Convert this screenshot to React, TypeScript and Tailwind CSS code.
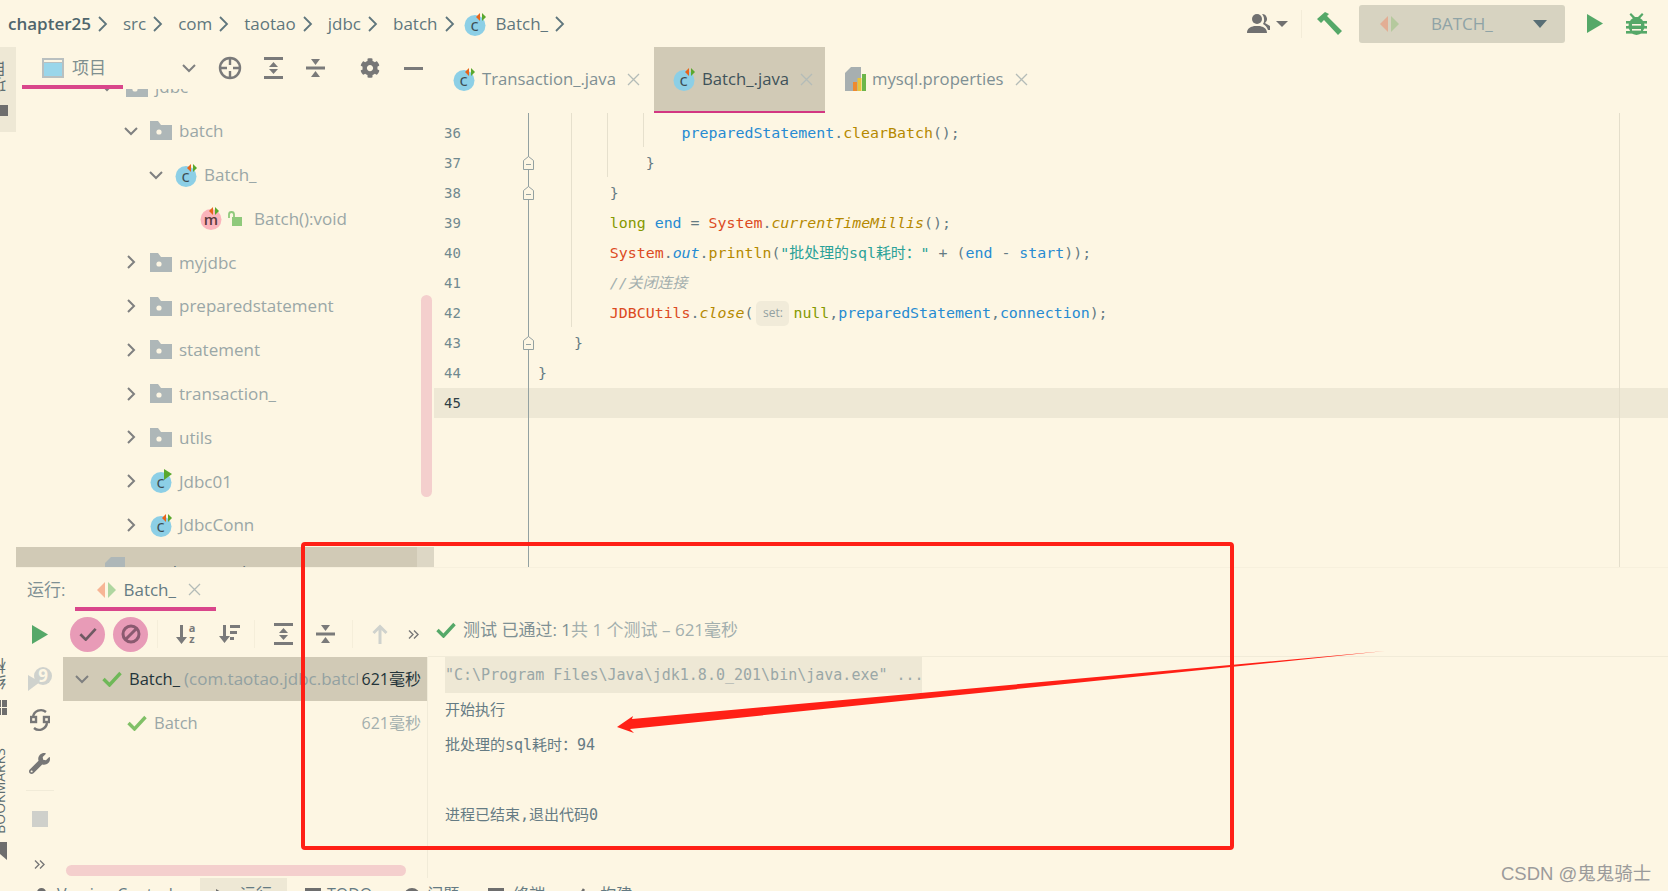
import { FaCog, FaWrench } from "react-icons/fa";

const MONO = "[font-family:'DejaVu_Sans_Mono','Noto_Sans_CJK_SC',monospace]";

function MiniRun({ x = 13, only = false }: { x?: number; only?: boolean }) {
  if (only) return <polygon points={`${x},0 ${x + 8},5 ${x},11`} fill="#5aa82d" />;
  return (
    <g>
      <polygon points={`${x + 3},1 ${x + 3},9 ${x - 1},5`} fill="#e8641b" />
      <polygon points={`${x + 5},1 ${x + 5},9 ${x + 9},5`} fill="#5aa82d" />
    </g>
  );
}

function ClassIcon({ only = false }: { only?: boolean }) {
  return (
    <svg width="23" height="24" viewBox="0 0 23 24" className="shrink-0">
      <circle cx="11" cy="13.5" r="10.5" fill="#8ccfe6" />
      <text x="10.5" y="19" textAnchor="middle" fontSize="17" fontFamily="Open Sans" fill="#3c4c52">
        c
      </text>
      <MiniRun only={only} x={only ? 14 : 13} />
    </svg>
  );
}

function MethodIcon() {
  return (
    <svg width="22" height="24" viewBox="0 0 22 24" className="shrink-0">
      <circle cx="11" cy="13.5" r="10.5" fill="#fbb4bb" />
      <text x="11" y="18.5" textAnchor="middle" fontSize="15" fontWeight="600" fontFamily="Open Sans" fill="#5b3b3b">
        m
      </text>
      <MiniRun x={10} />
    </svg>
  );
}

function FolderIcon() {
  return (
    <svg width="22" height="19" viewBox="0 0 22 19" className="shrink-0">
      <path d="M0 0h8l3 4h11v15H0z" fill="#aeb7b8" />
      <circle cx="9" cy="11" r="2.6" fill="#fdf6e3" />
    </svg>
  );
}

function Chevron({ open }: { open: boolean }) {
  return (
    <svg width="14" height="14" viewBox="0 0 14 14" fill="none" stroke="#7f8080" strokeWidth="2" className="shrink-0">
      <path d={open ? "M1 4l6 6 6-6" : "M4 1l6 6-6 6"} />
    </svg>
  );
}

function Close({ c = "#b4bcb8" }: { c?: string }) {
  return (
    <svg width="13" height="13" viewBox="0 0 13 13" stroke={c} strokeWidth="1.3" className="shrink-0">
      <path d="M1 1l11 11M12 1L1 12" />
    </svg>
  );
}

function Check({ c = "#55a868", w = 20, sw = 3.4 }: { c?: string; w?: number; sw?: number }) {
  return (
    <svg width={w} height={w * 0.8} viewBox="0 0 20 16" fill="none" stroke={c} strokeWidth={sw} className="shrink-0">
      <path d="M1.5 8l6 6L18.5 2" />
    </svg>
  );
}

function RunPair({ o = "#f7b595", g = "#afd6a0" }: { o?: string; g?: string }) {
  return (
    <svg width="19" height="16" viewBox="0 0 19 16" className="shrink-0">
      <polygon points="8,0 8,16 0,8" fill={o} />
      <polygon points="11,0 11,16 19,8" fill={g} />
    </svg>
  );
}

function ExpandAll() {
  return (
    <svg width="19" height="22" viewBox="0 0 19 22" fill="#7a7a7a" className="shrink-0">
      <rect width="19" height="3" />
      <rect y="19" width="19" height="3" />
      <polygon points="9.5,5 14,10 5,10" />
      <polygon points="9.5,17 14,12 5,12" />
    </svg>
  );
}

function CollapseAll() {
  return (
    <svg width="19" height="20" viewBox="0 0 19 20" fill="#7a7a7a" className="shrink-0">
      <rect y="8.5" width="19" height="3" />
      <polygon points="9.5,7 14,1 5,1" />
      <polygon points="9.5,13 14,19 5,19" />
    </svg>
  );
}

function More() {
  return (
    <svg width="11" height="9" viewBox="0 0 11 9" fill="none" stroke="#777" strokeWidth="1.4" className="shrink-0">
      <path d="M1 .5l4 4-4 4M6 .5l4 4-4 4" />
    </svg>
  );
}

function ToolSep() {
  return <div className="w-px h-[28px] bg-[#f5eeda] shrink-0" />;
}

const tree = [
  { label: "batch", kind: "folder", cls: "pl-[108px]", open: true, gap: "gap-[12px]" },
  { label: "Batch_", kind: "class", cls: "pl-[133px]", open: true, gap: "gap-[12px]" },
  { label: "myjdbc", kind: "folder", cls: "pl-[108px]", open: false, gap: "gap-[12px]" },
  { label: "preparedstatement", kind: "folder", cls: "pl-[108px]", open: false, gap: "gap-[12px]" },
  { label: "statement", kind: "folder", cls: "pl-[108px]", open: false, gap: "gap-[12px]" },
  { label: "transaction_", kind: "folder", cls: "pl-[108px]", open: false, gap: "gap-[12px]" },
  { label: "utils", kind: "folder", cls: "pl-[108px]", open: false, gap: "gap-[12px]" },
  { label: "Jdbc01", kind: "run", cls: "pl-[108px]", open: false, gap: "gap-[12px]" },
  { label: "JdbcConn", kind: "class", cls: "pl-[108px]", open: false, gap: "gap-[12px]" },
];

function TreeRow({ item }: { item: (typeof tree)[number] }) {
  return (
    <div className={`h-[43.8px] shrink-0 flex items-center ${item.cls} ${item.gap}`}>
      <Chevron open={item.open} />
      {item.kind === "folder" && <FolderIcon />}
      {item.kind === "class" && <ClassIcon />}
      {item.kind === "run" && <ClassIcon only />}
      <span className={`text-[#9aa7a7] text-[17px] ${item.kind === "folder" ? "-ml-[5px]" : "-ml-[6px]"}`}>{item.label}</span>
    </div>
  );
}

function ProjectPanel() {
  return (
    <div className="w-[418px] shrink-0 flex flex-col overflow-hidden relative">
      <div className="h-[42px] flex items-center relative shrink-0">
        <svg width="22" height="20" viewBox="0 0 22 20" className="ml-[26px] shrink-0">
          <rect width="22" height="20" fill="#b9c0c0" />
          <rect x="2" y="5" width="18" height="13" fill="#9ad6ea" />
          <rect x="2" y="2" width="18" height="2" fill="#fdf6e3" />
        </svg>
        <span className="ml-[8px] text-[17px] text-[#7f8f8f]">项目</span>
        <span className="ml-[76px]">
          <Chevron open />
        </span>
        <svg width="24" height="24" viewBox="0 0 24 24" fill="none" stroke="#7a7a7a" strokeWidth="2.4" className="ml-[22px] shrink-0">
          <circle cx="12" cy="12" r="10" />
          <path d="M12 2v7M12 15v7M2 12h7M15 12h7" />
        </svg>
        <span className="ml-[22px]">
          <ExpandAll />
        </span>
        <span className="ml-[23px]">
          <CollapseAll />
        </span>
        <FaCog className="ml-[35px] text-[#777] text-[20px] shrink-0" />
        <div className="ml-[24px] w-[19px] h-[3px] bg-[#7a7a7a] shrink-0" />
        <div className="absolute left-[6px] top-[38px] w-[101px] h-[4px] bg-[#d9468b]" />
      </div>
      <div className="h-[20px] overflow-hidden shrink-0">
        <div className="h-[44px] -mt-[24px] flex items-center pl-[84px] gap-[12px]">
          <Chevron open />
          <FolderIcon />
          <span className="text-[#9aa7a7] text-[17px] -ml-[5px]">jdbc</span>
        </div>
      </div>
      <TreeRow item={tree[0]} />
      <TreeRow item={tree[1]} />
      <div className="h-[43.8px] shrink-0 flex items-center pl-[184px]">
        <MethodIcon />
        <svg width="14" height="15" viewBox="0 0 14 15" className="ml-[6px] shrink-0">
          <rect x="4" y="6" width="10" height="9" fill="#8fc97b" />
          <path d="M1 7V3.5a2.5 2.5 0 0 1 5 0V6" fill="none" stroke="#8fc97b" strokeWidth="1.8" />
        </svg>
        <span className="ml-[12px] text-[#9aa7a7] text-[17px]">Batch():void</span>
      </div>
      {tree.slice(2).map((item) => (
        <TreeRow key={item.label} item={item} />
      ))}
      <div className="h-[44px] shrink-0 bg-[#ddd7c5]">
        <div className="w-[401px] h-full bg-[#d1cab6] flex items-center pl-[89px] gap-[5px]">
          <svg width="20" height="24" viewBox="0 0 20 24" className="shrink-0">
            <path d="M6 0h14v24H0V6z" fill="#aeb7b8" />
          </svg>
          <span className="mt-[5px] text-[17px] text-[#586e75]">mysql.properties</span>
        </div>
      </div>
      <div className="absolute left-[405px] top-[248px] w-[11px] h-[202px] rounded-full bg-[#f4cfcd]" />
    </div>
  );
}

function Tab({ name, icon, active, cls }: { name: string; icon: React.ReactNode; active?: boolean; cls: string }) {
  return (
    <div
      className={`h-[66px] flex items-center border-b-2 shrink-0 ${cls} ${
        active ? "bg-[#d1cab6] border-[#d33682]" : "border-transparent"
      }`}
    >
      {icon}
      <span className={`ml-[6px] text-[16.7px] ${active ? "text-[#3f5259]" : "text-[#7f9094]"}`}>{name}</span>
      <span className="ml-[11px]">
        <Close />
      </span>
    </div>
  );
}

const B = "text-[#268bd2]";
const Y = "text-[#b58900]";
const R = "text-[#dc4a22]";
const G = "text-[#859900]";
const P = "text-[#657b83]";

const code: React.ReactNode[] = [
  <>
    <span className={B}>{"                preparedStatement"}</span>
    <span className={P}>.</span>
    <span className={Y}>clearBatch</span>
    <span className={P}>();</span>
  </>,
  <span className={P}>{"            }"}</span>,
  <span className={P}>{"        }"}</span>,
  <>
    <span className={G}>{"        long "}</span>
    <span className={B}>end</span>
    <span className={P}> = </span>
    <span className={R}>System</span>
    <span className={P}>.</span>
    <span className={`${Y} italic`}>currentTimeMillis</span>
    <span className={P}>();</span>
  </>,
  <>
    <span className={R}>{"        System"}</span>
    <span className={P}>.</span>
    <span className={`${B} italic`}>out</span>
    <span className={P}>.</span>
    <span className={Y}>println</span>
    <span className={P}>(</span>
    <span className="text-[#2aa198]">"批处理的sql耗时："</span>
    <span className={P}> + (</span>
    <span className={B}>end</span>
    <span className={P}> - </span>
    <span className={B}>start</span>
    <span className={P}>));</span>
  </>,
  <span className="text-[#a3afae] italic">{"        //关闭连接"}</span>,
  <span className="flex items-center">
    <span className={R}>{"        JDBCUtils"}</span>
    <span className={P}>.</span>
    <span className={`${Y} italic`}>close</span>
    <span className={P}>(</span>
    <span className="ml-[3px] mr-[4px] w-[33px] h-[25px] rounded-[5px] bg-[#f1ebd9] flex items-center justify-center text-[12px] text-[#93a1a1] [font-family:'Open_Sans',sans-serif]">
      set:
    </span>
    <span className={G}>null</span>
    <span className={P}>,</span>
    <span className={B}>preparedStatement</span>
    <span className={P}>,</span>
    <span className={B}>connection</span>
    <span className={P}>);</span>
  </span>,
  <span className={P}>{"    }"}</span>,
  <span className={P}>{"}"}</span>,
  <span />,
];

function FoldMark({ cls }: { cls: string }) {
  return (
    <svg width="11" height="14" viewBox="0 0 11 14" fill="#fdf6e3" stroke="#93a1a1" className={`absolute left-[89px] ${cls}`}>
      <path d="M.5 13.5V4.5L5.5.5l5 4v9z" />
      <path d="M3 8.5h5" />
    </svg>
  );
}

function Editor() {
  return (
    <div className="flex-1 min-w-0 flex flex-col overflow-hidden">
      <div className="flex h-[66px] shrink-0">
        <Tab name="Transaction_.java" cls="w-[220px] pl-[19px]" icon={<ClassIcon />} />
        <Tab name="Batch_.java" cls="w-[171px] pl-[19px]" active icon={<ClassIcon />} />
        <Tab
          name="mysql.properties"
          cls="pl-[20px]"
          icon={
            <svg width="21" height="24" viewBox="0 0 21 24" className="shrink-0">
              <path d="M6 0h10v24H0V6z" fill="#a7afb0" />
              <rect x="8" y="15" width="4" height="9" fill="#ef8a2e" />
              <rect x="12.5" y="11" width="4" height="13" fill="#e8c33c" />
              <rect x="17" y="7" width="4" height="17" fill="#6cb649" />
            </svg>
          }
        />
      </div>
      <div className={`flex-1 relative pt-[5px] overflow-hidden text-[14.92px] ${MONO}`}>
        {code.map((line, i) => (
          <div key={i} className={`h-[30px] flex items-center ${i === 9 ? "bg-[#eee8d5]" : ""}`}>
            <span className={`w-[104px] pl-[10px] shrink-0 text-[14px] ${i === 9 ? "text-[#2f3f46]" : "text-[#71898f]"}`}>
              {36 + i}
            </span>
            <span className="whitespace-pre">{line}</span>
          </div>
        ))}
        {/* fold gutter and indent guides */}
        <div className="absolute left-[94px] top-0 bottom-0 w-px bg-[#93a1a1]" />
        <div className="absolute left-[137px] top-0 h-[214px] w-px bg-[#e6e0cd]" />
        <div className="absolute left-[173px] top-0 h-[64px] w-px bg-[#e6e0cd]" />
        <div className="absolute left-[209px] top-0 h-[34px] w-px bg-[#e6e0cd]" />
        <FoldMark cls="top-[43px]" />
        <FoldMark cls="top-[73px]" />
        <FoldMark cls="top-[223px]" />
        <div className="absolute left-[1185px] top-0 bottom-0 w-px bg-[#e4decb]" />
      </div>
    </div>
  );
}

function TestPanel() {
  return (
    <div className="w-[365px] shrink-0 flex flex-col">
      <div className="h-[46px] flex items-center shrink-0 pl-[7px]">
        <span className="w-[35px] h-[35px] rounded-full bg-[#e89bb7] flex items-center justify-center shrink-0">
          <Check c="#6f5a63" w={18} sw={3} />
        </span>
        <span className="ml-[8px] w-[35px] h-[35px] rounded-full bg-[#e89bb7] flex items-center justify-center shrink-0">
          <svg width="20" height="20" viewBox="0 0 20 20" fill="none" stroke="#8a5a70" strokeWidth="3">
            <circle cx="10" cy="10" r="8" />
            <path d="M4.5 15.5l11-11" />
          </svg>
        </span>
        <span className="ml-[9px]">
          <ToolSep />
        </span>
        <svg width="22" height="22" viewBox="0 0 22 22" className="ml-[17px] shrink-0" fill="#7a7a7a">
          <path d="M5 2h3v12h4l-5.5 7L1 14h4z" />
          <text x="17" y="9" textAnchor="middle" fontSize="11" fontWeight="700" fontFamily="Open Sans">a</text>
          <text x="17" y="20" textAnchor="middle" fontSize="11" fontWeight="700" fontFamily="Open Sans">z</text>
        </svg>
        <svg width="22" height="20" viewBox="0 0 22 20" className="ml-[21px] shrink-0" fill="#7a7a7a">
          <path d="M5 1h3v11h4l-5.5 7L1 12h4z" />
          <rect x="12" y="1" width="10" height="3" />
          <rect x="12" y="7" width="7" height="3" />
          <rect x="12" y="13" width="4" height="3" />
        </svg>
        <span className="ml-[14px]">
          <ToolSep />
        </span>
        <span className="ml-[19px]">
          <ExpandAll />
        </span>
        <span className="ml-[23px]">
          <CollapseAll />
        </span>
        <span className="ml-[17px]">
          <ToolSep />
        </span>
        <svg width="16" height="20" viewBox="0 0 16 20" fill="none" stroke="#cfd2cd" strokeWidth="3" className="ml-[19px] shrink-0">
          <path d="M8 20V3M1.5 9L8 2.5 14.5 9" />
        </svg>
        <span className="ml-[20px]">
          <More />
        </span>
      </div>
      <div className="flex-1 flex flex-col border-r border-[#f1ebd8] relative">
        <div className="h-[44px] bg-[#d1cab6] flex items-center pl-[12px] shrink-0">
          <Chevron open />
          <span className="ml-[13px]">
            <Check c="#6fb858" />
          </span>
          <span className="ml-[7px] w-[55px] shrink-0 text-[16.5px] text-[#23343a]">Batch_</span>
          <span className="w-[174px] shrink-0 overflow-hidden whitespace-nowrap text-[17px] text-[#93a1a1]">
            (com.taotao.jdbc.batch)
          </span>
          <span className="ml-auto mr-[6px] text-[16px] text-[#23343a]">621毫秒</span>
        </div>
        <div className="h-[44px] flex items-center pl-[64px] shrink-0">
          <Check c="#80c067" />
          <span className="ml-[7px] text-[16.5px] text-[#9aa7a7]">Batch</span>
          <span className="ml-auto mr-[6px] text-[16px] text-[#a3afae]">621毫秒</span>
        </div>
        <div className="absolute left-[3px] top-[208px] w-[340px] h-[11px] rounded-full bg-[#f4cfcd]" />
      </div>
    </div>
  );
}

function RunPanel() {
  return (
    <div className="h-[311px] flex flex-col shrink-0 border-t border-[#f7f0dd]">
      <div className="h-[43px] relative flex items-center shrink-0">
        <span className="ml-[11px] text-[17px] text-[#7f9094]">运行:</span>
        <span className="ml-[32px]">
          <RunPair />
        </span>
        <span className="ml-[7px] text-[17px] text-[#657b83]">Batch_</span>
        <span className="ml-[12px]">
          <Close />
        </span>
        <div className="absolute left-[59px] top-[39px] w-[141px] h-[4px] bg-[#d9468b]" />
      </div>
      <div className="flex-1 flex min-h-0">
        <div className="w-[47px] shrink-0 flex flex-col items-center">
          <svg width="16" height="19" viewBox="0 0 16 19" className="mt-[14px] shrink-0">
            <polygon points="0,0 16,9.5 0,19" fill="#55a868" />
          </svg>
          <svg width="24" height="26" viewBox="0 0 24 26" className="mt-[23px] shrink-0">
            <polygon points="0,8 12,15 0,24" fill="#cfd2cd" />
            <circle cx="15" cy="9" r="9" fill="#cfd2cd" />
            <text x="15" y="15" textAnchor="middle" fontSize="17" fontWeight="700" fontFamily="Open Sans" fill="#fdf6e3">9</text>
          </svg>
          <svg width="20" height="26" viewBox="0 0 20 26" fill="none" stroke="#777" strokeWidth="2.4" className="mt-[14px] shrink-0">
            <path d="M3 10a8 8 0 0 1 13-5M17 16a8 8 0 0 1-13 5" />
            <rect x="1" y="10" width="5" height="5" />
            <rect x="14" y="10" width="5" height="5" />
          </svg>
          <FaWrench className="mt-[20px] text-[#777] text-[21px] shrink-0" />
          <div className="mt-[16px] w-[28px] h-px bg-[#f1ebd8] shrink-0" />
          <div className="mt-[20px] w-[16px] h-[16px] bg-[#cfd0cb] shrink-0" />
          <span className="mt-[33px]">
            <More />
          </span>
        </div>
        <TestPanel />
        <div className="flex-1 min-w-0 flex flex-col">
          <div className="h-[46px] flex items-center border-b border-[#f1ebd8] shrink-0 pl-[8px] pb-[8px]">
            <Check w={20} />
            <span className="ml-[7px] text-[17px] text-[#7f9094]">测试 已通过: 1</span>
            <span className="text-[17px] text-[#a3afae]">共 1 个测试 – 621毫秒</span>
          </div>
          <div className={`pl-[17px] text-[15px] ${MONO} text-[#657b83]`}>
            <div className="h-[36px] w-[477px] bg-[#eee8d5] flex items-center text-[#9aa7a7] whitespace-pre">
              "C:\Program Files\Java\jdk1.8.0_201\bin\java.exe" ...
            </div>
            <div className="h-[35px] flex items-center">开始执行</div>
            <div className="h-[35px] flex items-center">批处理的sql耗时：94</div>
            <div className="h-[35px]" />
            <div className="h-[35px] flex items-center">进程已结束,退出代码0</div>
          </div>
        </div>
      </div>
    </div>
  );
}

function LeftRail() {
  return (
    <div className="w-[16px] shrink-0 flex flex-col overflow-hidden text-[#5f6f72]">
      <div className="h-[85px] bg-[#eee8d5] flex flex-col shrink-0">
        <span className="mt-[14px] -ml-[9px] text-[16px] leading-none [writing-mode:vertical-rl] rotate-180 h-[32px]">项目</span>
        <div className="mt-[12px] -ml-[2px] w-[10px] h-[11px] bg-[#6e6e6e]" />
      </div>
      <span className="mt-[526px] -ml-[9px] text-[16px] leading-none [writing-mode:vertical-rl] rotate-180 h-[32px] shrink-0">结构</span>
      <div className="mt-[10px] w-[7px] h-[15px] grid grid-cols-[1px_5px] gap-[1px] shrink-0">
        <div className="bg-[#6e6e6e]" />
        <div className="bg-[#6e6e6e]" />
        <div className="bg-[#6e6e6e]" />
        <div className="bg-[#6e6e6e]" />
      </div>
      <span className="mt-[33px] -ml-[7px] text-[14px] leading-none uppercase [writing-mode:vertical-rl] rotate-180 shrink-0">Bookmarks</span>
      <svg width="8" height="18" viewBox="0 0 8 18" className="mt-[8px] shrink-0">
        <path d="M0 0h7v18L0 12z" fill="#6e6e6e" />
      </svg>
    </div>
  );
}

function StatusBar() {
  return (
    <div className="h-[13px] shrink-0 flex overflow-hidden text-[16px] text-[#657b83] leading-[22px]">
      <div className="w-[37px] shrink-0" />
      <div className="w-[163px] shrink-0 flex pt-[5px]">
        <div className="w-[9px] h-[9px] mt-[5px] rounded-full bg-[#6e6e6e] shrink-0" />
        <span className="ml-[11px]">Version Control</span>
      </div>
      <div className="w-[87px] shrink-0 bg-[#eee8d5] flex pt-[5px] pl-[16px]">
        <svg width="10" height="12" viewBox="0 0 10 12" className="mt-[6px] shrink-0">
          <polygon points="0,0 10,6 0,12" fill="#6e6e6e" />
        </svg>
        <span className="ml-[14px]">运行</span>
      </div>
      <div className="flex pt-[5px] ml-[18px]">
        <div className="w-[16px] h-[12px] mt-[5px] bg-[#6e6e6e] shrink-0" />
        <span className="ml-[6px]">TODO</span>
      </div>
      <div className="flex pt-[5px] ml-[32px]">
        <div className="w-[16px] h-[16px] mt-[5px] rounded-full bg-[#6e6e6e] shrink-0" />
        <span className="ml-[7px]">问题</span>
      </div>
      <div className="flex pt-[5px] ml-[29px]">
        <div className="w-[16px] h-[12px] mt-[5px] bg-[#6e6e6e] shrink-0" />
        <span className="ml-[9px]">终端</span>
      </div>
      <div className="flex pt-[5px] ml-[30px]">
        <svg width="10" height="14" viewBox="0 0 10 14" fill="none" stroke="#6e6e6e" strokeWidth="2.6" className="mt-[5px] shrink-0">
          <path d="M9 1L2 12" />
        </svg>
        <span className="ml-[15px]">构建</span>
      </div>
    </div>
  );
}

function Crumb({ text, dark }: { text: string; dark?: boolean }) {
  return <span className={`text-[17px] ${dark ? "text-[#4f656c] font-semibold" : "text-[#5f767d]"}`}>{text}</span>;
}

function CrumbSep() {
  return (
    <svg width="10" height="16" viewBox="0 0 10 16" fill="none" stroke="#5f767d" strokeWidth="1.8" className="ml-[7px] mr-[15px] shrink-0">
      <path d="M1 1l7 7-7 7" />
    </svg>
  );
}

function TopBar() {
  return (
    <div className="h-[47px] shrink-0 flex items-center pl-[8px]">
      {["chapter25", "src", "com", "taotao", "jdbc", "batch"].map((t, i) => (
        <span key={t} className="flex items-center">
          <Crumb text={t} dark={i === 0} />
          <CrumbSep />
        </span>
      ))}
      <span className="-ml-[6px]">
        <ClassIcon />
      </span>
      <span className="ml-[9px]">
        <Crumb text="Batch_" />
      </span>
      <CrumbSep />
      <div className="ml-auto flex items-center">
        <svg width="24" height="19" viewBox="0 0 24 19" fill="#707070" className="shrink-0">
          <circle cx="10" cy="5" r="5" />
          <path d="M0 19c0-5 4-6 7-7h6c3 1 7 2 7 7z" />
          <path d="M15 0a5 5 0 0 1 3 9l5 3v4h-2c-1-3-3-5-5-6a7 7 0 0 0 1-5c0-2-1-4-2-5z" />
        </svg>
        <svg width="12" height="6" viewBox="0 0 12 6" className="ml-[5px] shrink-0">
          <polygon points="0,0 12,0 6,6" fill="#707070" />
        </svg>
        <div className="ml-[13px] w-px h-[28px] bg-[#f3ecd8]" />
        <svg width="25" height="23" viewBox="0 0 25 23" fill="#55a868" className="ml-[15px] shrink-0">
          <path d="M0 7L8 0l4 2-2 2 15 15-4 4L7 8 4 11z" />
        </svg>
        <div className="ml-[17px] w-[206px] h-[38px] rounded-[3px] bg-[#d7d3c1] flex items-center pl-[21px] shrink-0">
          <RunPair o="#e3ae94" g="#b5c99d" />
          <span className="ml-[32px] text-[17px] text-[#8fa3a6]">BATCH_</span>
          <svg width="14" height="8" viewBox="0 0 14 8" className="ml-auto mr-[18px] shrink-0">
            <polygon points="0,0 14,0 7,8" fill="#586e75" />
          </svg>
        </div>
        <svg width="16" height="19" viewBox="0 0 16 19" className="ml-[22px] shrink-0">
          <polygon points="0,0 16,9.5 0,19" fill="#55a868" />
        </svg>
        <svg width="23" height="22" viewBox="0 0 23 22" className="ml-[22px] mr-[20px] shrink-0">
          <ellipse cx="11.5" cy="13" rx="8" ry="9" fill="#55a868" />
          <path d="M6 0l4 4h3l4-4 1.5 1.5-4 4.5h-6l-4-4.5z" fill="#55a868" />
          <rect x="1" y="8" width="21" height="2.6" fill="#55a868" />
          <rect x="1" y="13" width="21" height="2.6" fill="#55a868" />
          <rect x="1" y="18" width="21" height="2.6" fill="#55a868" />
          <rect x="7" y="11" width="9" height="1.6" fill="#fdf6e3" />
          <rect x="7" y="16" width="9" height="1.6" fill="#fdf6e3" />
        </svg>
      </div>
    </div>
  );
}

export default function App() {
  return (
    <div className="relative w-[1668px] h-[891px] overflow-hidden bg-[#fdf6e3] flex flex-col [font-family:'Open_Sans','Noto_Sans_CJK_SC',sans-serif]">
      <TopBar />
      <div className="flex-1 min-h-0 flex">
        <LeftRail />
        <div className="flex-1 min-w-0 flex flex-col">
          <div className="h-[520px] flex shrink-0">
            <ProjectPanel />
            <Editor />
          </div>
          <RunPanel />
        </div>
      </div>
      <StatusBar />

      {/* red annotation drawn over the shot */}
      <div className="absolute left-[301px] top-[542px] w-[933px] h-[308px] border-[4px] border-[#ff2016] rounded-[4px]" />
      <svg width="1668" height="891" className="absolute left-0 top-0 pointer-events-none">
        <polygon points="617,727 633,716 632,719 1385,651 630,729 634,733" fill="#ff2016" />
      </svg>
      <span className="absolute left-[1501px] top-[860px] text-[18.5px] text-[#9b9b9b] [font-family:'Liberation_Sans','Noto_Sans_CJK_SC',sans-serif]">
        CSDN @鬼鬼骑士
      </span>
    </div>
  );
}
